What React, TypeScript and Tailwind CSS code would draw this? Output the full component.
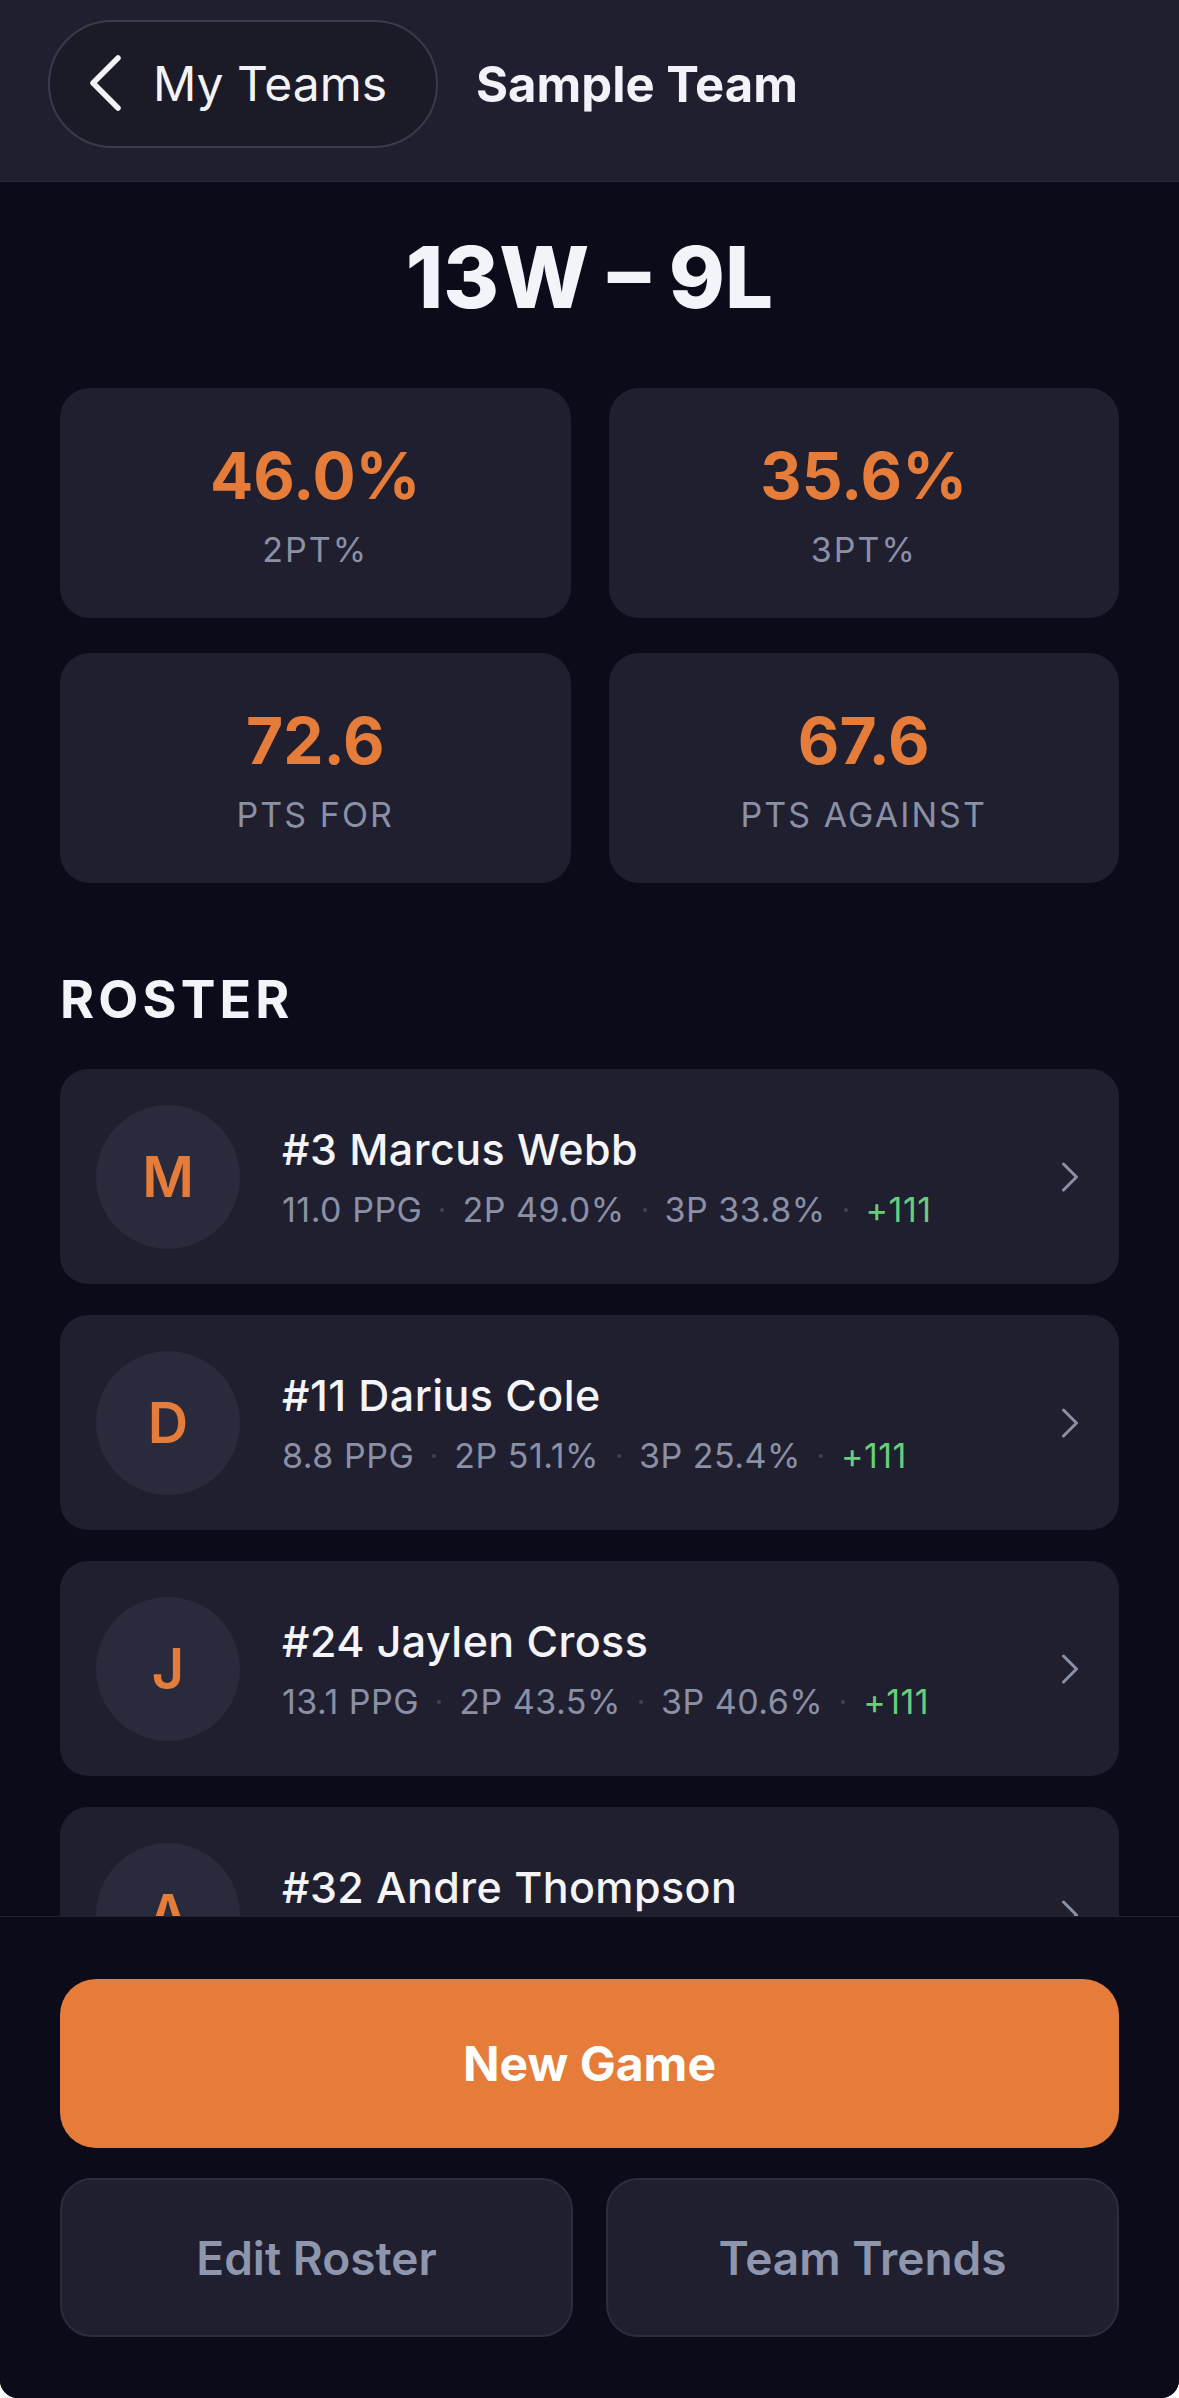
import React from "react";

type Player = {
  initial: string;
  name: string;
  ppg: string;
  p2: string;
  p3: string;
  pm: string;
};

const players: Player[] = [
  { initial: "M", name: "#3 Marcus Webb", ppg: "11.0 PPG", p2: "2P 49.0%", p3: "3P 33.8%", pm: "+111" },
  { initial: "D", name: "#11 Darius Cole", ppg: "8.8 PPG", p2: "2P 51.1%", p3: "3P 25.4%", pm: "+111" },
  { initial: "J", name: "#24 Jaylen Cross", ppg: "13.1 PPG", p2: "2P 43.5%", p3: "3P 40.6%", pm: "+111" },
  { initial: "A", name: "#32 Andre Thompson", ppg: "9.7 PPG", p2: "2P 47.2%", p3: "3P 31.9%", pm: "+111" },
];

const stats = [
  { value: "46.0%", label: "2PT%" },
  { value: "35.6%", label: "3PT%" },
  { value: "72.6", label: "PTS FOR" },
  { value: "67.6", label: "PTS AGAINST" },
];

function Dot() {
  return <span className="mx-[18px] inline-block h-[4px] w-[4px] shrink-0 rounded-full bg-[#3f4254]" />;
}

function PlayerCard({ p }: { p: Player }) {
  return (
    <div className="flex h-[215px] shrink-0 items-center rounded-[28px] bg-[#1f1f2f] pl-[36px] pr-[40px]">
      <div className="flex h-[144px] w-[144px] shrink-0 items-center justify-center rounded-full bg-[#2a2a3d]">
        <span className="text-[56px] font-semibold leading-none text-[#e67c39]">{p.initial}</span>
      </div>
      <div className="ml-[42px] flex min-w-0 flex-1 flex-col">
        <div className="text-[43px] font-medium leading-[50px] tracking-[0.01em] text-[#f4f4f9]">{p.name}</div>
        <div className="mt-[16px] flex items-center text-[34px] leading-[40px] tracking-[0.015em] text-[#8a90a5]">
          <span>{p.ppg}</span>
          <Dot />
          <span>{p.p2}</span>
          <Dot />
          <span>{p.p3}</span>
          <Dot />
          <span className="text-[#67cf7c]">{p.pm}</span>
        </div>
      </div>
      <svg width="18" height="30" viewBox="0 0 18 30" className="shrink-0">
        <polyline points="2.5,2 15.5,15 2.5,28" fill="none" stroke="#8a90a5" strokeWidth="3" strokeLinecap="round" strokeLinejoin="round" />
      </svg>
    </div>
  );
}

export default function App() {
  return (
    <div className="bg-white font-['Inter','Liberation_Sans',sans-serif]">
      <div className="flex h-[2398px] w-[1179px] flex-col overflow-hidden rounded-b-[18px] bg-[#0b0b1a]">
        {/* Header */}
        <header className="flex h-[182px] shrink-0 items-start border-b border-[#2a2a3a] bg-[#1f1f30] pl-[48px] pt-[20px]">
          <button className="flex h-[128px] w-[390px] items-center rounded-full border-2 border-[#383a4f] bg-[#1b1b27] pl-[38px]">
            <svg width="36" height="60" viewBox="0 0 36 60" className="shrink-0">
              <polyline points="30,4 5,29 30,54" fill="none" stroke="#f2f2f8" strokeWidth="5.5" strokeLinecap="round" strokeLinejoin="round" />
            </svg>
            <span className="ml-[29px] text-[48px] leading-none text-[#f2f2f8]">My Teams</span>
          </button>
          <div className="ml-[38px] flex h-[128px] items-center text-[49px] font-bold leading-none text-[#f2f2f8]">
            Sample Team
          </div>
        </header>

        {/* Main */}
        <main className="flex min-h-0 flex-1 flex-col overflow-hidden px-[60px] pt-[53px]">
          <div className="text-center text-[85px] font-extrabold leading-none text-[#f3f4fa]">
            13W – 9L
          </div>

          <div className="mt-[68px] grid grid-cols-2 gap-x-[38px] gap-y-[35px]">
            {stats.map((s) => (
              <div key={s.label} className="flex h-[230px] flex-col items-center justify-center rounded-[30px] bg-[#1f1f2f] pt-[4px]">
                <div className="text-[64px] font-bold leading-none text-[#e67c39]">{s.value}</div>
                <div className="mt-[25px] text-[34px] leading-none tracking-[0.06em] text-[#8a90a5]">{s.label}</div>
              </div>
            ))}
          </div>

          <div className="mt-[91px] text-[52px] font-bold leading-none tracking-[0.08em] text-[#f3f4fa]">ROSTER</div>

          <div className="mt-[43px] flex flex-col gap-[31px]">
            {players.map((p) => (
              <PlayerCard key={p.name} p={p} />
            ))}
          </div>
        </main>

        {/* Bottom bar */}
        <footer className="flex h-[482px] shrink-0 flex-col border-t border-[#20202e] bg-[#0b0b1a] px-[60px] pt-[62px]">
          <button className="flex h-[169px] w-full items-center justify-center rounded-[36px] bg-[#e67c39] text-[48px] font-bold leading-none text-white">
            New Game
          </button>
          <div className="mt-[30px] grid grid-cols-2 gap-[33px]">
            <button className="flex h-[159px] items-center justify-center rounded-[32px] border-2 border-[#2c2c3f] bg-[#1f1f2f] text-[46px] font-semibold leading-none text-[#8e96ad]">
              Edit Roster
            </button>
            <button className="flex h-[159px] items-center justify-center rounded-[32px] border-2 border-[#2c2c3f] bg-[#1f1f2f] text-[46px] font-semibold leading-none text-[#8e96ad]">
              Team Trends
            </button>
          </div>
        </footer>
      </div>
    </div>
  );
}
